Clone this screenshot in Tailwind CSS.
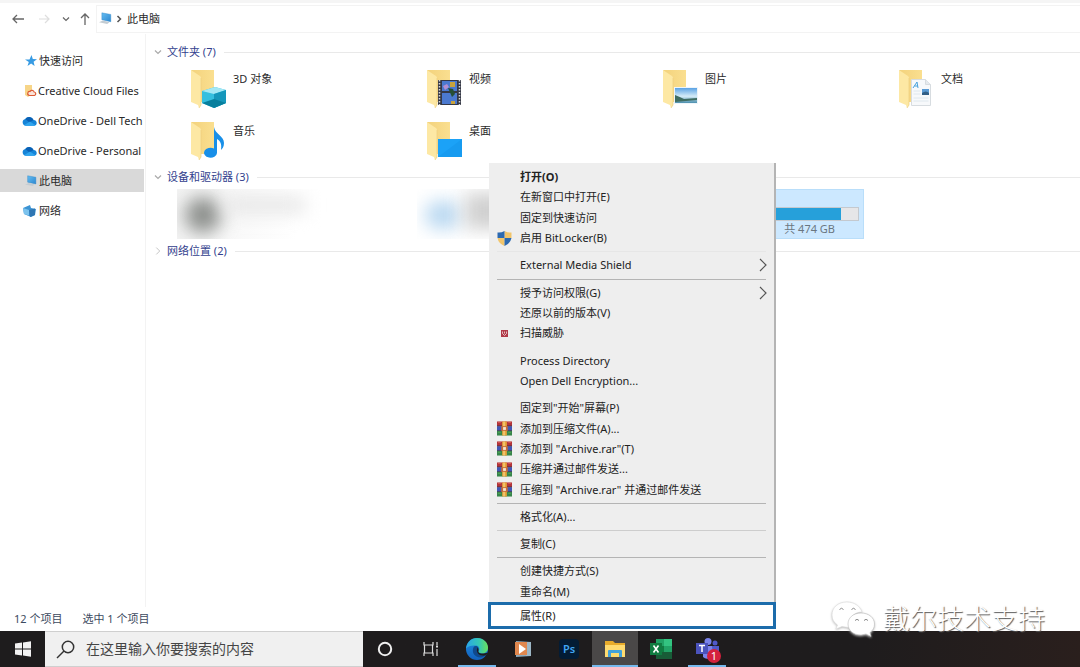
<!DOCTYPE html>
<html lang="zh-CN">
<head>
<meta charset="utf-8">
<title>此电脑</title>
<script src="https://cdn.jsdelivr.net/npm/@tailwindcss/browser@4"></script>
</head>
<body class="relative flex h-screen flex-col overflow-hidden bg-white font-['Noto_Sans','Noto_Sans_CJK_SC',sans-serif] text-[11px] leading-4 text-[#2a2a2a]">

<svg class="absolute h-0 w-0" aria-hidden="true">
  <defs>
    <linearGradient id="fg" x1="0" x2="1"><stop offset="0" stop-color="#f3d27c"/><stop offset="1" stop-color="#fadf90"/></linearGradient>
    <linearGradient id="pc" x1="0" y1="0" x2="1" y2="1"><stop offset="0" stop-color="#64bdf2"/><stop offset="1" stop-color="#2d87d0"/></linearGradient>
    <linearGradient id="sky" x1="0" y1="0" x2="0" y2="1"><stop offset="0" stop-color="#5aa2e4"/><stop offset=".55" stop-color="#d5ecf8"/><stop offset="1" stop-color="#4b8fae"/></linearGradient>
    <linearGradient id="eg1" x1="0" y1="0" x2="1" y2="0"><stop offset="0" stop-color="#2aa5e8"/><stop offset=".6" stop-color="#35c8b4"/><stop offset="1" stop-color="#6be05a"/></linearGradient>
    <linearGradient id="eg2" x1="0" y1="0" x2="0" y2="1"><stop offset="0" stop-color="#1e8fe0"/><stop offset="1" stop-color="#1260bd"/></linearGradient>
  </defs>
  <symbol id="folder" viewBox="0 0 40 42">
    <path d="M2 3h23v32H12z" fill="url(#fg)"/>
    <path d="M2 3l9 6q1 1 1 2v27l-2 3-1-3-7-3z" fill="#fde8a4"/>
    <path d="M12 11v27l-2 3" fill="none" stroke="#edcf7e" stroke-width=".7"/>
  </symbol>
  <symbol id="pcicon" viewBox="0 0 16 16">
    <path d="M3.500 1l11 2v9L3.500 9.500z" fill="url(#pc)" stroke="#2c84c5" stroke-width=".5"/>
    <path d="M0 12.500l5-2 8 2-3 2.300z" fill="#c3ccd3"/>
  </symbol>
  <symbol id="cloud" viewBox="0 0 16 12">
    <path d="M4 11a3.600 3.600 0 0 1-.5-7.100A5 5 0 0 1 12.300 5 3 3 0 0 1 13 11z" fill="#1584d8"/>
    <path d="M3.500 3.900A5 5 0 0 1 12.300 5L8 7.500z" fill="#0a60b4"/>
    <path d="M2 10.400L8.500 6.500 14.500 10.500 13 11H4z" fill="#2fa5ee"/>
  </symbol>
  <symbol id="rar" viewBox="0 0 16 15">
    <path d="M0 0h16v5H0z" fill="#b3343a"/><path d="M0 5h16v5H0z" fill="#4257b5"/><path d="M0 10h16v5H0z" fill="#37864a"/>
    <path d="M0 4.700h16M0 9.700h16" stroke="#3b3040" stroke-width=".7"/>
    <path d="M5.500 0h5v15h-5z" fill="#e9a43a"/><path d="M4.500 5h7v5h-7z" fill="#c46a3a"/>
    <path d="M6.500 6h3v3h-3z" fill="#f7e6cf"/><path d="M7.500 0v5M7.500 10v5" stroke="#f6e0a0"/>
    <path d="M1 1h3M12 1h3" stroke="#d85d58"/><path d="M1 11.500h3M12 11.500h3" stroke="#59a85c"/>
  </symbol>
  <symbol id="down" viewBox="0 0 8 8"><path d="M1 2.500l3 3 3-3" fill="none" stroke="currentColor" stroke-width="1.200"/></symbol>
  <symbol id="right" viewBox="0 0 8 14"><path d="M1 1l6 6-6 6" fill="none" stroke="currentColor" stroke-width="1.200"/></symbol>
</svg>

<header class="flex h-[34px] shrink-0 items-center border-t-[3px] border-[#f5f5f5] pl-2.5">
  <nav class="flex items-center" aria-label="导航">
    <button aria-label="后退" class="flex w-4 justify-center"><svg class="h-3 w-3" viewBox="0 0 12 12" fill="none" stroke="#666" stroke-width="1.300"><path d="M12 6H1M5 2L1 6l4 4"/></svg></button>
    <button aria-label="前进" class="ml-2.5 flex w-4 justify-center"><svg class="h-3 w-3" viewBox="0 0 12 12" fill="none" stroke="#dedede" stroke-width="1.200"><path d="M1 6h10M7 2l4 4-4 4"/></svg></button>
    <button aria-label="最近位置" class="ml-1.5 flex w-4 justify-center text-[#666]"><svg class="h-2 w-2"><use href="#down"/></svg></button>
    <button aria-label="上移" class="ml-[3px] flex w-4 justify-center"><svg class="h-3 w-3" viewBox="0 0 12 12" fill="none" stroke="#666" stroke-width="1.300"><path d="M6 12V1M2 5l4-4 4 4"/></svg></button>
  </nav>
  <div class="ml-[3px] flex h-7 flex-1 items-center border border-r-0 border-[#f3f3f3] pl-0.5">
    <svg class="h-[13px] w-[13px]"><use href="#pcicon"/></svg>
    <svg class="ml-1 h-2.5 w-1.5" viewBox="0 0 6 10" fill="none" stroke="#555" stroke-width="1.500"><path d="M1.500 2l3 3-3 3"/></svg>
    <a href="#" class="ml-[5px]">此电脑</a>
  </div>
</header>

<div class="flex min-h-0 flex-1">
  <nav class="flex w-[146px] shrink-0 flex-col gap-[7px] overflow-hidden border-r border-[#f3f3f3] pt-[15px] whitespace-nowrap" aria-label="位置">
    <a href="#" class="mr-px flex h-[23px] shrink-0 items-center gap-0.5 overflow-hidden pl-[25px]">
      <svg class="h-3 w-3 shrink-0" viewBox="0 0 12 12"><path d="M6.500 0l1.300 4 4.200.2-3.400 2.500 1 4.300-3.500-2.400L2.500 11l1.300-4L0 4.600h4.500z" fill="#379be3"/></svg>
      <span>快速访问</span></a>
    <a href="#" class="mr-px flex h-[23px] shrink-0 items-center gap-px overflow-hidden pl-[25px]">
      <svg class="h-3 w-3 shrink-0" viewBox="0 0 12 12"><path d="M0 0h7v9L3 12 0 10z" fill="#f7d588"/><path d="M4.500 10.500a2 2 0 0 1 .5-4 2.300 2.300 0 0 1 4.200.5 1.800 1.800 0 0 1 .3 3.500z" fill="#fbe3d8" stroke="#dc5a34" stroke-width="1.200"/></svg>
      <span>Creative Cloud Files</span></a>
    <a href="#" class="mr-px flex h-[23px] shrink-0 items-center gap-px overflow-hidden pl-[22px]">
      <svg class="h-3 w-[15px] shrink-0"><use href="#cloud"/></svg><span>OneDrive - Dell Tech</span></a>
    <a href="#" class="mr-px flex h-[23px] shrink-0 items-center gap-px overflow-hidden pl-[22px]">
      <svg class="h-3 w-[15px] shrink-0"><use href="#cloud"/></svg><span>OneDrive - Personal</span></a>
    <a href="#" aria-current="page" class="mr-px flex h-[23px] shrink-0 items-center gap-0.5 overflow-hidden bg-[#d9d9d9] pl-[25px]">
      <svg class="h-3 w-3 shrink-0"><use href="#pcicon"/></svg><span>此电脑</span></a>
    <a href="#" class="mr-px flex h-[23px] shrink-0 items-center gap-[3px] overflow-hidden pl-[23px]">
      <svg class="h-3 w-[13px] shrink-0" viewBox="0 0 13 12"><path d="M0 3l7-3 1 3 5 1-1 6-4 2-7-3z" fill="#3b93d3"/><path d="M0 3l6 2v5.500L1 9z" fill="#7cc3ee"/><path d="M6 5l6-1.500V10l-5 2z" fill="#2f76b3"/></svg>
      <span>网络</span></a>
  </nav>

  <main class="min-w-0 flex-1 overflow-hidden pt-2.5">
    <h2><button class="flex h-4 w-full items-center text-[#333f8e]"><svg class="ml-2 h-2 w-2 shrink-0 text-[#aaa]"><use href="#down"/></svg><span class="ml-[5px]">文件夹 (7)</span><span class="ml-2 h-px flex-1 bg-[#e9e9e9]"></span></button></h2>
    <ul class="grid grid-cols-[repeat(4,236px)] pt-[7px] pl-[43px]">
      <li class="flex h-[52px] gap-1"><svg class="h-[42px] w-10" viewBox="0 0 40 42"><use href="#folder"/><path d="M13 24l13-4 11 3v13l-12 5-12-5z" fill="#35bfdf"/><path d="M13 24l13-4 11 3-12 4z" fill="#a4e8f5"/><path d="M25 27l12-4v13l-12 5z" fill="#1597bb"/><path d="M13 36l12-4 12 4-12 5z" fill="#087f9d"/></svg><span class="pt-1">3D 对象</span></li>
      <li class="flex h-[52px] gap-1"><svg class="h-[42px] w-10" viewBox="0 0 40 42"><use href="#folder"/><path d="M13 13h23v25H13z" fill="#353846"/><path d="M17 14h15v10H17zM17 26h15v11H17z" fill="#4b79cf"/><path d="M14.500 13v25M34.500 13v25" stroke="#d6d6d6" stroke-width="1.500" stroke-dasharray="1.500 1.500"/><path d="M25 15h5v5h-5zM26 34h4v3h-4z" fill="#c9a33c"/><path d="M23 21l5 1 2 5-3 3z" fill="#264f35"/><path d="M18 19l4-2 2 3-4 3z" fill="#b58fd1"/></svg><span class="pt-1">视频</span></li>
      <li class="flex h-[52px] gap-1"><svg class="h-[42px] w-10" viewBox="0 0 40 42"><use href="#folder"/><path d="M13 20h24v17H13z" fill="#eef5fa"/><path d="M14 21h22v15H14z" fill="url(#sky)"/><path d="M14 28q5 2 9 4l13-1v2l-22 2z" fill="#3f6d62"/></svg><span class="pt-1">图片</span></li>
      <li class="flex h-[52px] gap-1"><svg class="h-[42px] w-10" viewBox="0 0 40 42"><use href="#folder"/><path d="M14.500 12.500h14l5 5v21h-19z" fill="#f7f9fb" stroke="#d7dce0"/><path d="M28.500 12.500v5h5" fill="#e6eaee" stroke="#d7dce0"/><path d="M16 21l4-6 1 6M17.500 19h3.500" fill="none" stroke="#48a2dc"/><path d="M25 22h7v6h-7z" fill="#5b9bd4"/><path d="M25 26q4-3 7 0v2h-7z" fill="#315f86"/><path d="M16.500 24h7M16.500 27h7M16.500 31h15M16.500 34h15" stroke="#dfe8ee"/></svg><span class="pt-1">文档</span></li>
      <li class="flex h-[52px] gap-1"><svg class="h-[42px] w-10" viewBox="0 0 40 42"><use href="#folder"/><path d="M25 8c1 7 10 9 10 16 0 4-2 6-3 7 1-7-1-9-4-11v14a6.500 5 0 1 1-3-4.500V8z" fill="#188fe8"/></svg><span class="pt-1">音乐</span></li>
      <li class="flex h-[52px] gap-1"><svg class="h-[42px] w-10" viewBox="0 0 40 42"><use href="#folder"/><path d="M13 20h24v18H13z" fill="#1ba2f7"/><path d="M13 38l24-18v18z" fill="#179bf0"/></svg><span class="pt-1">桌面</span></li>
    </ul>

    <h2><button class="-mt-1 flex h-5 w-full items-center text-[#333f8e]"><svg class="ml-2 h-2 w-2 shrink-0 text-[#aaa]"><use href="#down"/></svg><span class="ml-[5px]">设备和驱动器 (3)</span><span class="ml-2 h-px flex-1 bg-[#e9e9e9]"></span></button></h2>
    <ul class="grid grid-cols-[240px_244px_203px] pt-0.5 pl-[31px]">
      <li class="flex h-[50px] overflow-hidden bg-linear-to-r from-[#f3f3f3] via-white to-white" aria-label="设备">
        <span class="mt-2 ml-2 h-9 w-9 rounded-full bg-[#8c8f8c] blur-[9px]"></span>
        <span class="mt-2 ml-1 h-4 w-20 bg-[#e6e6e6] blur-[9px]"></span>
      </li>
      <li class="flex h-[50px] overflow-hidden" aria-label="设备">
        <span class="mt-3 ml-2 h-7 w-9 rounded-full bg-[#b9d8f1] blur-[9px]"></span>
        <span class="mt-1 ml-1 h-9 w-16 bg-[#d0d0d0] blur-[9px]"></span>
      </li>
      <li class="flex h-[50px] flex-col border border-[#b9defa] bg-[#cce8ff] px-1 pt-[17px]">
        <div class="h-[14px] w-full border border-[#c4c9cf] bg-[#e6e6e8]" role="meter" aria-label="已用空间" aria-valuenow="91"><div class="h-full bg-[#26a0da]" style="width:91%"></div></div>
        <span class="pr-6 text-right text-[#6a7680]">共 474 GB</span>
      </li>
    </ul>
    <h2><button class="mt-1 flex h-4 w-full items-center text-[#333f8e]"><svg class="ml-2 h-2 w-2 shrink-0 text-[#aaa]"><use href="#right"/></svg><span class="ml-[5px]">网络位置 (2)</span><span class="ml-2 h-px flex-1 bg-[#e9e9e9]"></span></button></h2>
  </main>
</div>

<footer class="flex h-6 shrink-0 items-center gap-5 pl-3.5 text-[#3c4a60]"><span>12 个项目</span><span>选中 1 个项目</span></footer>

<div class="flex h-9 shrink-0 bg-linear-to-r from-[#1e1c1d] from-80% to-[#2a1f1d]">
  <button aria-label="开始" class="flex w-[45px] items-center justify-center"><svg class="h-4 w-4" viewBox="0 0 16 16" fill="#f2f2f2"><path d="M0 2.500l7-1v6H0zM8 1.400L16 .3v7.200H8zM0 8.500h7v6l-7-1zM8 8.500h8v7.200l-8-1.100z"/></svg></button>
  <label class="flex w-[318px] items-center gap-[11px] border-y border-[#cfcfcf] bg-[#f0f0f0] pl-[11px]">
    <svg class="h-[19px] w-[19px] shrink-0" viewBox="0 0 19 19" fill="none" stroke="#333" stroke-width="1.500"><circle cx="12" cy="7" r="5.700"/><path d="M8 11l-7 7"/></svg>
    <input aria-label="搜索" placeholder="在这里输入你要搜索的内容" class="w-full text-sm placeholder:text-[#454545]">
  </label>
  <div class="-ml-px flex">
    <button aria-label="Cortana" class="flex w-[46px] items-center justify-center"><svg class="h-4 w-4" viewBox="0 0 16 16"><circle cx="8" cy="8" r="6.200" fill="none" stroke="#eee" stroke-width="2"/></svg></button>
    <button aria-label="任务视图" class="flex w-[46px] items-center justify-center"><svg class="h-4 w-4" viewBox="0 0 16 16" fill="none" stroke="#ddd" stroke-width="1.200"><path d="M1 1v3h9V1M1 15v-3h9v3M1.500 4v8M9.500 4v8M14 1v3M14 8v7"/><path d="M13 5.500h2" stroke-width="2"/></svg></button>
    <button aria-label="Edge" class="relative flex w-[46px] items-center justify-center"><svg class="h-6 w-6" viewBox="0 0 24 24"><circle cx="12" cy="12" r="11" fill="url(#eg2)"/><path d="M1 11.500C2 5 6.500 1 12 1c6.500 0 11 4.500 11 9.500 0 4-3 6-6 6-2.500 0-4-1-3.500-2 1.500-2 1-5.500-2.500-6C7 8 3 9 1 11.500z" fill="url(#eg1)"/><path d="M9 9.500c-2 3-1.500 8 2.500 10 4 2 8 .5 9.500-2-3 2-7.500 1-8.500-2.500-.5-2 1-3 .7-4.500-.4-1.500-2.800-2-4.200-1z" fill="#10498c"/><path d="M12.700 10.500c1.300 1.300.8 3 .6 4 .6 1.600 2.700 2.400 5.200 2l4-.8-1.300 2.500c-3 1-6.500.3-8-1.500-1.700-2-1.700-4.500-.5-6.200z" fill="#1e1c1d"/></svg><span class="absolute bottom-0 h-0.5 w-[38px] bg-[#76b9ed]"></span></button>
    <button aria-label="媒体播放器" class="flex w-[46px] items-center justify-center"><svg class="h-[18px] w-[18px]" viewBox="0 0 18 18"><path d="M2 1l15 1v14L2 17z" fill="#8daabd"/><path d="M12 2h5v14h-5z" fill="#9db7c6"/><path d="M1 2h12v13H1z" fill="#e0874e"/><path d="M5 4l7 5-7 5z" fill="#fff"/></svg></button>
    <button aria-label="Photoshop" class="flex w-[46px] items-center justify-center"><span class="flex h-5 w-5 items-center justify-center rounded-sm bg-[#031c35] font-semibold text-[#41a6f3]">Ps</span></button>
    <button aria-label="文件资源管理器" class="relative flex w-[46px] items-center justify-center bg-[#4a4848]"><svg class="h-[18px] w-5" viewBox="0 0 20 18"><path d="M0 1h8l2 2h10v14H0z" fill="#e8ab2b"/><path d="M0 5h20v12H0z" fill="#ffdb70"/><path d="M3 17v-6q0-1 1-1h12q1 0 1 1v6h-3v-4H6v4z" fill="#42a2dc"/></svg><span class="absolute inset-x-0 bottom-0 h-0.5 bg-[#76b9ed]"></span></button>
    <button aria-label="Excel" class="flex w-[46px] items-center justify-center"><svg class="h-5 w-[22px]" viewBox="0 0 22 20"><path d="M6 0h8v7H6z" fill="#21a366"/><path d="M14 0h8v7h-8z" fill="#33c481"/><path d="M6 7h8v6H6z" fill="#107c41"/><path d="M14 7h8v6h-8z" fill="#21a366"/><path d="M6 13h16v7H6z" fill="#185c37"/><path d="M0 4h12v12H0z" fill="#107c41"/><path d="M3.500 6.500l5 7M8.500 6.500l-5 7" stroke="#fff" stroke-width="1.600"/></svg></button>
    <button aria-label="Teams" class="relative flex w-[46px] items-center justify-center"><svg class="h-[22px] w-6" viewBox="0 0 24 22"><circle cx="13" cy="3.500" r="3.500" fill="#7b83eb"/><circle cx="20" cy="5" r="2.500" fill="#5059c9"/><path d="M8 8h10v8a6 6 0 0 1-10 3z" fill="#7b83eb"/><path d="M17 8h7v7q-1 4-6 4z" fill="#5059c9"/><path d="M1 5h12v11H1z" fill="#4b53bc"/><path d="M4 7.500h6M7 7.500V14" stroke="#fff" stroke-width="1.500"/></svg><span class="absolute top-[18px] left-[23px] flex h-[14px] w-[14px] items-center justify-center rounded-full bg-[#d4213d] text-[11px] text-white">1</span><span class="absolute bottom-0 h-0.5 w-[38px] bg-[#76b9ed]"></span></button>
  </div>
</div>

<div role="menu" class="absolute top-[163px] bottom-[38px] left-[489px] flex w-[287px] flex-col border-r-2 border-[#b4b4b4] bg-[#eee] pt-1 text-[#222]">
  <button role="menuitem" class="flex flex-1 items-center pl-[31px] font-bold">打开(O)</button>
  <button role="menuitem" class="flex flex-1 items-center pl-[31px]">在新窗口中打开(E)</button>
  <button role="menuitem" class="flex flex-1 items-center pl-[31px]">固定到快速访问</button>
  <button role="menuitem" class="flex flex-1 items-center gap-2 pl-2"><svg class="h-[15px] w-[15px]" viewBox="0 0 15 15"><path d="M7.500 0q3.500 2 7 1.500V7H7.500z" fill="#f2c56b"/><path d="M7.500 0Q4 2 .5 1.500V7h7z" fill="#2c69b0"/><path d="M.5 7q1 5.500 7 8V7z" fill="#f2c56b"/><path d="M14.500 7q-1 5.500-7 8V7z" fill="#2c69b0"/></svg>启用 BitLocker(B)</button>
  <div role="separator" class="flex h-[7px] shrink-0 items-center px-2"><span class="h-px w-full bg-[#e6e6e6]"></span></div>
  <button role="menuitem" class="flex flex-1 items-center justify-between pr-[7px] pl-[31px]">External Media Shield<svg class="h-3.5 w-2 text-[#555]"><use href="#right"/></svg></button>
  <div role="separator" class="flex h-[7px] shrink-0 items-center px-2"><span class="h-px w-full bg-[#b4b4b4]"></span></div>
  <button role="menuitem" class="flex flex-1 items-center justify-between pr-[7px] pl-[31px]">授予访问权限(G)<svg class="h-3.5 w-2 text-[#555]"><use href="#right"/></svg></button>
  <button role="menuitem" class="flex flex-1 items-center pl-[31px]">还原以前的版本(V)</button>
  <button role="menuitem" class="flex flex-1 items-center gap-3 pl-3"><svg class="h-[7px] w-[7px]" viewBox="0 0 7 7"><path d="M0 0h7v7H0z" fill="#b03a48"/><path d="M1.500 1.500v2l2 2 2-2v-2M3.500 1.500v2" fill="none" stroke="#f3dadd" stroke-width=".8"/></svg>扫描威胁</button>
  <div role="separator" class="h-[7px] shrink-0"></div>
  <button role="menuitem" class="flex flex-1 items-center pl-[31px]">Process Directory</button>
  <button role="menuitem" class="flex flex-1 items-center pl-[31px]">Open Dell Encryption...</button>
  <div role="separator" class="h-[7px] shrink-0"></div>
  <button role="menuitem" class="flex flex-1 items-center pl-[31px]">固定到"开始"屏幕(P)</button>
  <button role="menuitem" class="flex flex-1 items-center gap-2 pl-2"><svg class="h-[15px] w-[15px]"><use href="#rar"/></svg>添加到压缩文件(A)...</button>
  <button role="menuitem" class="flex flex-1 items-center gap-2 pl-2"><svg class="h-[15px] w-[15px]"><use href="#rar"/></svg>添加到 "Archive.rar"(T)</button>
  <button role="menuitem" class="flex flex-1 items-center gap-2 pl-2"><svg class="h-[15px] w-[15px]"><use href="#rar"/></svg>压缩并通过邮件发送...</button>
  <button role="menuitem" class="flex flex-1 items-center gap-2 pl-2"><svg class="h-[15px] w-[15px]"><use href="#rar"/></svg>压缩到 "Archive.rar" 并通过邮件发送</button>
  <div role="separator" class="flex h-[7px] shrink-0 items-center px-2"><span class="h-px w-full bg-[#b4b4b4]"></span></div>
  <button role="menuitem" class="flex flex-1 items-center pl-[31px]">格式化(A)...</button>
  <div role="separator" class="flex h-[7px] shrink-0 items-center px-2"><span class="h-px w-full bg-[#cdcdcd]"></span></div>
  <button role="menuitem" class="flex flex-1 items-center pl-[31px]">复制(C)</button>
  <div role="separator" class="flex h-[7px] shrink-0 items-center px-2"><span class="h-px w-full bg-[#b4b4b4]"></span></div>
  <button role="menuitem" class="flex flex-1 items-center pl-[31px]">创建快捷方式(S)</button>
  <button role="menuitem" class="flex flex-1 items-center pl-[31px]">重命名(M)</button>
  <button role="menuitem" class="-mr-0.5 -ml-px flex h-[27px] shrink-0 items-center border-[3px] border-[#1c6cab] bg-white pt-0.5 pl-[29px]">属性(R)</button>
</div>

<div class="absolute right-[35px] bottom-7 flex items-center gap-2 text-[27px] leading-10 font-light whitespace-nowrap text-white [text-shadow:1px_1px_1px_#555]">
  <svg class="h-9 w-11 drop-shadow-[0px_1px_1px_#bbb]" viewBox="0 0 44 36"><path d="M16 1C7 1 1 6.500 1 14c0 4.500 2 7.500 5.500 10L5 28l6-2.500 7 1C17 17 23 11 31 11 29 5 23 1 16 1z" fill="#fff" stroke="#dcdcdc" stroke-width=".6"/><path d="M30 12c-8 0-13 5-13 11s5 11 13 11l5-1 5 2.500-1-4c3-2 4.500-5 4.500-8.500C43.500 17 38 12 30 12z" fill="#fff" stroke="#bbb" stroke-width=".6"/><path d="M8.500 8.500q2-2.500 4 0M20.500 8.500q2-2.500 4 0M24 19.500q2-2.500 4 0M33 19.500q2-2.500 4 0" fill="none" stroke="#888"/></svg>
  <span>戴尔技术支持</span>
</div>
</body>
</html>
